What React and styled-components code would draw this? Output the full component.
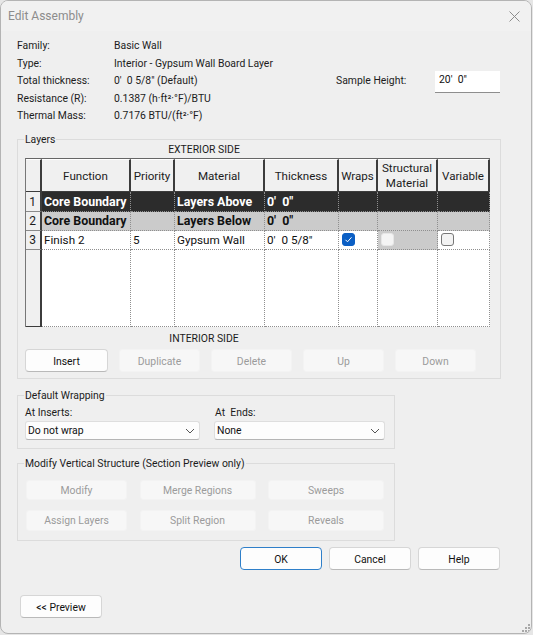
import React from "react";
import styled, { createGlobalStyle } from "styled-components";

const Global = createGlobalStyle`
  html, body { margin: 0; padding: 0; background: #e6e6e6; }
  body { width: 533px; height: 635px; overflow: hidden; font-family: Roboto, "Open Sans", sans-serif; font-size: 10.4px; color: #1c1c1c; }
  * { box-sizing: border-box; }
`;

const Win = styled.div`
  position: relative;
  width: 532px;
  height: 634px;
  background: #efefef;
  border: 1px solid #b4b4b4;
  border-radius: 8px;
  overflow: hidden;
`;
const TitleBar = styled.div`
  height: 30px;
  display: flex;
  align-items: center;
  justify-content: space-between;
  padding: 0 11px 0 7px;
  background: #f1f1f1;
  color: #8c8c8c;
  font-size: 12px;
`;
const Body = styled.div`
  padding: 6.25px 30px 0 16px;
`;
const InfoRow = styled.div`
  display: grid;
  grid-template-columns: 97px 222px 99px 65px;
  height: 17.5px;
  line-height: 17.5px;
  white-space: nowrap;
`;
const SampleInput = styled.div`
  height: 22px;
  margin-top: -1px;
  background: #fff;
  border-bottom: 1px solid #8e8e8e;
  padding: 0 4px;
  line-height: 18px;
  color: #111;
`;
const Group = styled.div`
  position: relative;
  border: 1px solid #dcdcdc;
  margin-top: ${(p) => p.$top}px;
  width: ${(p) => p.$width}px;
  padding: ${(p) => p.$pad};
`;
const Legend = styled.div`
  position: absolute;
  top: -8px;
  left: 6px;
  padding: 0 1px;
  background: #efefef;
  line-height: 15px;
  white-space: nowrap;
`;
const SideLabel = styled.div`
  width: 358px;
  height: ${(p) => p.$h}px;
  line-height: ${(p) => p.$h + 1}px;
  margin-top: ${(p) => p.$mt || 0}px;
  text-align: center;
  font-size: 10.4px;
`;
const Table = styled.div`
  display: grid;
  grid-template-columns: 16px 89px 44px 90px 74px 39px 60px 52px;
  grid-template-rows: 33px 20px 19px 19px 77px;
  width: 465px;
  height: 169px;
  border-top: 1px solid #666;
  border-left: 1px solid #777;
`;
const HeadCell = styled.div`
  display: flex;
  align-items: center;
  justify-content: center;
  text-align: center;
  padding-top: 1px;
  line-height: 15px;
  font-size: 11.6px;
  background: #f0f0f0;
  border-top: 1px solid #fff;
  border-right: 2px solid #3c3c3c;
  border-bottom: 1px solid #3c3c3c;
  white-space: nowrap;
`;
const RowHead = styled.div`
  display: flex;
  align-items: center;
  justify-content: center;
  padding-right: 1px;
  font-size: 12px;
  background: #f0f0f0;
  border-right: 2px solid #3c3c3c;
  border-bottom: 1px solid ${(p) => (p.$last ? "#3c3c3c" : "#8a8a8a")};
`;
const Cell = styled.div`
  display: flex;
  align-items: center;
  padding: 0 0 1px 2px;
  font-size: ${(p) => (p.$tone === "dark" || p.$tone === "gray" ? 12.4 : 11.7)}px;
  white-space: nowrap;
  overflow: hidden;
  font-weight: ${(p) => (p.$tone === "dark" || p.$tone === "gray" ? 700 : 400)};
  color: ${(p) => (p.$tone === "dark" ? "#fff" : "#111")};
  background: ${(p) =>
    p.$tone === "dark" ? "#2c2c2c" : p.$tone === "gray" || p.$shade ? "#cbcbcb" : "#fff"};
  border-right: 1px dotted #8f8f8f;
  border-bottom: 1px dotted #8f8f8f;
`;
const CheckCell = styled(Cell)`
  padding-left: 3px;
`;
const Check = styled.span`
  display: flex;
  align-items: center;
  justify-content: center;
  width: 13px;
  height: 13px;
  border-radius: 3px;
  background: ${(p) => (p.$on ? "#0b5fc4" : p.$disabled ? "#f4f4f4" : "#f3f3f3")};
  border: 1px solid ${(p) => (p.$on ? "#0b5fc4" : p.$disabled ? "#e6e6e6" : "#777")};
`;
const ButtonRow = styled.div`
  display: flex;
  gap: 11px;
  margin-top: 3px;
`;
const Btn = styled.div`
  flex: none;
  display: flex;
  align-items: center;
  justify-content: center;
  width: ${(p) => p.$w || 82}px;
  height: 23px;
  padding-top: 1px;
  border-radius: 4px;
  background: #fdfdfd;
  border: 1px solid ${(p) => (p.$focus ? "#2f7fc9" : "#d6d6d6")};
  border-bottom-color: ${(p) => (p.$focus ? "#2f7fc9" : "#b9b9b9")};
  color: #111;
`;
const DisabledBtn = styled.div`
  flex: none;
  display: flex;
  align-items: center;
  justify-content: center;
  height: ${(p) => p.$h || 23}px;
  width: ${(p) => (p.$w ? p.$w + "px" : "auto")};
  padding-top: 1px;
  border-radius: 3px;
  background: #f7f7f7;
  border: 1px solid #f3f3f3;
  color: #9b9b9b;
`;
const Selects = styled.div`
  display: grid;
  grid-template-columns: 175px 171px;
  column-gap: 14px;
`;
const FieldLabel = styled.div`
  height: 15px;
  line-height: 14px;
  white-space: pre;
  padding-left: ${(p) => p.$indent || 0}px;
`;
const SelectBox = styled.div`
  display: flex;
  align-items: center;
  justify-content: space-between;
  height: 19px;
  padding: 0 4px 0 2px;
  background: #fdfdfd;
  border: 1px solid #dedede;
  border-bottom-color: #b5b5b5;
  border-radius: 3px;
  color: #111;
`;
const ModifyGrid = styled.div`
  display: grid;
  grid-template-columns: 101px 116px 116px;
  grid-auto-rows: 20.5px;
  column-gap: 12.5px;
  row-gap: 10px;
`;
const Footer = styled.div`
  display: flex;
  justify-content: flex-end;
  gap: 7px;
  margin-top: 6px;
  width: 484px;
  padding-right: 1px;
`;
const PreviewWrap = styled.div`
  margin: 25px 0 0 3px;
`;
const Grip = styled.svg`
  position: absolute;
  right: 0;
  bottom: 0;
`;

const columns = ["Function", "Priority", "Material", "Thickness", "Wraps", "Structural\nMaterial", "Variable"];
const rows = [
  { n: 1, tone: "dark", cells: ["Core Boundary", "", "Layers Above", "0'  0\""] },
  { n: 2, tone: "gray", cells: ["Core Boundary", "", "Layers Below", "0'  0\""] },
  { n: 3, tone: "", cells: ["Finish 2", "5", "Gypsum Wall", "0'  0 5/8\""], checks: true },
];
const info = [
  ["Family:", "Basic Wall"],
  ["Type:", "Interior - Gypsum Wall Board Layer"],
  ["Total thickness:", "0'  0 5/8\" (Default)"],
  ["Resistance (R):", "0.1387 (h·ft²·°F)/BTU"],
  ["Thermal Mass:", "0.7176 BTU/(ft²·°F)"],
];
const Pre = styled.span`white-space: pre;`;
const HeadText = styled.span`white-space: pre-line;`;

const Chevron = () => (
  <svg width="10" height="6" viewBox="0 0 10 6">
    <path d="M1 1l4 4 4-4" fill="none" stroke="#555" strokeWidth="1" />
  </svg>
);

export default function App() {
  return (
    <>
      <Global />
      <Win>
        <TitleBar>
          <span>Edit Assembly</span>
          <svg width="11" height="11" viewBox="0 0 11 11">
            <path d="M.5.5l10 10M10.5.5l-10 10" stroke="#8c8c8c" strokeWidth="1" />
          </svg>
        </TitleBar>
        <Body>
          {info.map(([k, v], i) => (
            <InfoRow key={k}>
              <span>{k}</span>
              <Pre>{v}</Pre>
              {i === 2 && <span>Sample Height:</span>}
              {i === 2 && <SampleInput><Pre>20'  0"</Pre></SampleInput>}
            </InfoRow>
          ))}
          <Group $top={14.25} $width={484} $pad="1px 7px 6px 7px">
            <Legend>Layers</Legend>
            <SideLabel $h={17}>EXTERIOR SIDE</SideLabel>
            <Table>
              <HeadCell />
              {columns.map((c) => (
                <HeadCell key={c}><HeadText>{c}</HeadText></HeadCell>
              ))}
              {rows.map((r) => (
                <React.Fragment key={r.n}>
                  <RowHead>{r.n}</RowHead>
                  {r.cells.map((c, i) => (
                    <Cell key={i} $tone={r.tone}><Pre>{c}</Pre></Cell>
                  ))}
                  <CheckCell $tone={r.tone}>
                    {r.checks && (
                      <Check $on>
                        <svg width="9" height="9" viewBox="0 0 9 9">
                          <path d="M1.5 4.8l2 2 4-4.5" fill="none" stroke="#fff" strokeWidth="1" />
                        </svg>
                      </Check>
                    )}
                  </CheckCell>
                  <CheckCell $tone={r.tone} $shade={r.checks}>
                    {r.checks && <Check $disabled />}
                  </CheckCell>
                  <CheckCell $tone={r.tone}>{r.checks && <Check />}</CheckCell>
                </React.Fragment>
              ))}
              <RowHead $last />
              {columns.map((c) => (
                <Cell key={c} />
              ))}
            </Table>
            <SideLabel $h={16} $mt={3}>INTERIOR SIDE</SideLabel>
            <ButtonRow>
              <Btn $w={83}>Insert</Btn>
              {["Duplicate", "Delete", "Up", "Down"].map((b) => (
                <DisabledBtn key={b} $w={81}>{b}</DisabledBtn>
              ))}
            </ButtonRow>
          </Group>
          <Group $top={16} $width={378} $pad="10px 7px 8px 7px">
            <Legend>Default Wrapping</Legend>
            <Selects>
              <FieldLabel>At Inserts:</FieldLabel>
              <FieldLabel $indent={1}>At  Ends:</FieldLabel>
              <SelectBox>Do not wrap<Chevron /></SelectBox>
              <SelectBox>None<Chevron /></SelectBox>
            </Selects>
          </Group>
          <Group $top={14} $width={378} $pad="15.5px 8px 9.5px 8px">
            <Legend>Modify Vertical Structure (Section Preview only)</Legend>
            <ModifyGrid>
              {["Modify", "Merge Regions", "Sweeps", "Assign Layers", "Split Region", "Reveals"].map((b) => (
                <DisabledBtn key={b} $h={20.5}>{b}</DisabledBtn>
              ))}
            </ModifyGrid>
          </Group>
          <Footer>
            <Btn $focus>OK</Btn>
            <Btn>Cancel</Btn>
            <Btn>Help</Btn>
          </Footer>
          <PreviewWrap>
            <Btn>&lt;&lt; Preview</Btn>
          </PreviewWrap>
        </Body>
        <Grip width="10" height="10" viewBox="0 0 10 10">
          <g fill="#a8a8a8">
            <rect x="7" y="1" width="2" height="2" />
            <rect x="4" y="4" width="2" height="2" />
            <rect x="7" y="4" width="2" height="2" />
            <rect x="1" y="7" width="2" height="2" />
            <rect x="4" y="7" width="2" height="2" />
            <rect x="7" y="7" width="2" height="2" />
          </g>
        </Grip>
      </Win>
    </>
  );
}
